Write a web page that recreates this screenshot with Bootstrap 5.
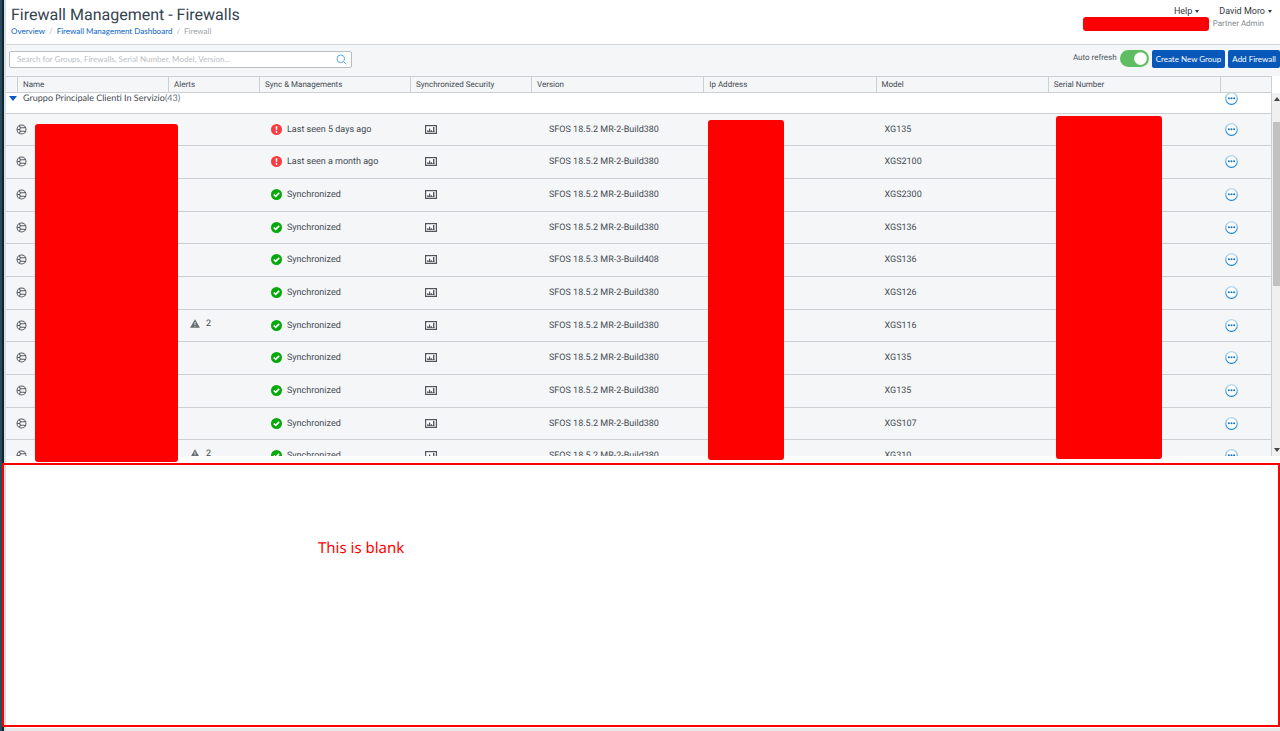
<!DOCTYPE html>
<html lang="en">
<head>
<meta charset="utf-8">
<meta name="viewport" content="width=device-width, initial-scale=1">
<title>Firewall Management - Firewalls</title>
<link href="https://cdn.jsdelivr.net/npm/bootstrap@5.3.0/dist/css/bootstrap.min.css" rel="stylesheet">
<style>
body{font-family:Roboto,"Liberation Sans",sans-serif;font-size:9px;line-height:12px;color:#444b52;background:#fff;text-rendering:geometricPrecision}
a{text-decoration:none;color:#0b63c5}
svg{display:block}
.rail{width:6px;background:linear-gradient(90deg,#2c4a5c 0 2px,#0c2634 2px 4px,#d9dee1 4px)}
.page-head{height:45px;padding:5px 8px 0 5px;border-bottom:1px solid #d3d5d8}
h1{font-size:16px;line-height:20px;color:#33434f}
.breadcrumb,.btn-main,.search-wrap .form-control,.group-name{font-family:Lato,Roboto,sans-serif}
.breadcrumb{font-size:8px;--bs-breadcrumb-item-padding-x:4px;--bs-breadcrumb-divider-color:#a5abb0}
.breadcrumb .active{color:#a0a6ab}
.menu-btn{border:0;background:none;padding:0;color:#33393f;font-size:9px;line-height:12px}
.menu-btn::after{border-width:3px 2px 0;margin-left:3px;vertical-align:1px}
.role-text{font-size:8px;color:#858b91}
.redact{background:#f00;border-radius:3px}
.redact-id{width:126px;height:14px}
.tools,.panel{background:#f4f6f8}
.tools{height:31px;padding:0 0 3px 3px}
.search-wrap{width:343px}
.search-wrap .form-control{height:17px;min-height:0;padding:0 24px 0 7px;font-size:8px;line-height:12px;border:1px solid #b9bec3;border-radius:2px;color:#444}
.search-wrap .form-control::placeholder{color:#b9bec3}
.search-wrap svg{right:5px;top:3px}
.form-switch.refresh{min-height:0;padding:0;gap:3px;color:#4b555e;font-size:8px}
.form-switch.refresh .form-check-input{width:29px;height:17px;margin:0;float:none;border:0;background-color:#5fbe61;background-size:17px}
.actions{gap:3px}
.btn-main{height:18px;padding:0 4px;border:0;border-radius:2px;background:#0758b8;color:#fff;font-size:8px;line-height:18px}
.btn-main:hover{background:#064a9c;color:#fff}
.grid-clip{height:380px;overflow:hidden}
.fw-table{table-layout:fixed;margin:0;color:inherit;border-collapse:separate;border-spacing:0;--bs-table-bg:transparent}
.fw-table>:not(caption)>*>*{padding:0;border:0;color:#444b52;background:none}
.fw-table th{height:17px;font-weight:400;font-size:8px;line-height:15px;vertical-align:top}
.fw-table>thead>tr>th{border:solid #cdd0d3;border-width:1px 1px 1px 0;padding-left:5px}
.fw-table td{white-space:nowrap;vertical-align:top}
.fw-table>tbody>tr>td{border-bottom:1px solid #cdd0d3}
.fw-table>tbody>tr>td:last-child{border-right:1px solid #cdd0d3}
.group-row{background:#fff}
.clip20{height:20px;overflow:hidden;line-height:10px}
.device td{height:33px}
.device:nth-child(3n+2) td{height:32px}
.cell{height:31px}
.in-sync{padding-left:11px;gap:5px}
.in-sec{padding-left:14px}
.in-ver{padding-left:17px}
.in-mod{padding-left:8px}
.in-act{padding-left:4px}
.in-alert{padding-left:21px;gap:6px;height:27px}
.in-name{padding-left:10px}
.act{border:0;padding:0;background:none;color:#1681cc}
.overlay-cols{inset:0;display:grid;grid-template-columns:12px 151px 91px 151px 121px 1fr 1fr 1fr 1fr 51px;padding-right:8px;pointer-events:none}
.cover-name{grid-column:2/4;width:143px;height:338px;margin:48px 0 0 17px}
.cover-ip{grid-column:7;width:76px;height:340px;margin:44px 0 0 4px}
.cover-sn{grid-column:9;width:106px;height:343px;margin:40px 0 0 7px}
.scroller{width:8px;background:#fff;padding-top:17px}
.track{background:#f0f0f0;height:363px;padding:4px 0 4px 1px}
.thumb{background:#c1c1c1;height:164px;margin-top:21px}
.note-box{border:2px solid #f00;margin:7px 0 4px -4px;padding:73px 0 0 314px;font-family:"Noto Sans","Open Sans",sans-serif;font-size:15px;line-height:20px;color:#f00}
.foot-strip{height:3px;margin-top:-3px;background:#e8e8e8}
</style>
</head>
<body>
<svg class="d-none" aria-hidden="true">
<symbol id="i-node" viewBox="0 0 12 12"><g fill="none" stroke="#555c62" stroke-width="1.1"><circle cx="6" cy="6" r="4.9"/><path d="M1.2 6h2.8M8.6 4.2H4.8L4 6l.8 2h3.8M8.6 4.2l2-.4M8.6 8l2 .4M4.8 4.2 3.6 2M4.8 8 3.6 10"/></g></symbol>
<symbol id="i-bad" viewBox="0 0 11 11"><circle cx="5.5" cy="5.5" r="5.5" fill="#fb3a3f"/><path d="M4.6 2.2h1.8l-.3 4h-1.2z" fill="#fff"/><circle cx="5.5" cy="8" r=".9" fill="#fff"/></symbol>
<symbol id="i-ok" viewBox="0 0 11 11"><circle cx="5.5" cy="5.5" r="5.5" fill="#06a80a"/><path d="m2.8 5.5 1.9 1.9 3.5-3.6" fill="none" stroke="#fff" stroke-width="1.7"/></symbol>
<symbol id="i-sec" viewBox="0 0 12 9"><path d="M.6.6h10.8v7.8H.6z" fill="#fff" stroke="#50565c" stroke-width="1.2"/><path d="M2.4 7V5h1v2zM4 7V3.6h1.2V7zM5.8 7V5h1v2zM8 7V2h1.4v5z" fill="#50565c"/><path d="M2 6.6h7.6" stroke="#50565c" stroke-width=".8"/></symbol>
<symbol id="i-warn" viewBox="0 0 10 9"><path d="M5 .2 9.9 8.8H.1z" fill="#666c72"/><path d="M5 3v3M5 6.8v1" stroke="#fff" stroke-width=".8"/></symbol>
<symbol id="i-more" viewBox="0 0 13 13"><circle cx="6.5" cy="6.5" r="5.8" fill="#fff" stroke="url(#ring)" stroke-width="1.2"/><g fill="#1476ba"><circle cx="3.9" cy="6.2" r="1"/><circle cx="6.5" cy="6.2" r="1"/><circle cx="9.1" cy="6.2" r="1"/></g></symbol>
</svg>
<svg class="position-absolute" width="0" height="0" aria-hidden="true"><linearGradient id="ring" x1="0" y1="0" x2="0" y2="1"><stop offset="0" stop-color="#b5d9ef"/><stop offset="1" stop-color="#1681cc"/></linearGradient></svg>

<div class="d-flex min-vh-100 overflow-hidden">
  <nav class="rail flex-shrink-0" aria-label="Main"></nav>
  <main class="flex-fill d-flex flex-column">
    <header class="page-head d-flex justify-content-between">
      <div>
        <h1 class="m-0 fw-normal">Firewall Management - Firewalls</h1>
        <nav aria-label="breadcrumb"><ol class="breadcrumb m-0">
          <li class="breadcrumb-item"><a href="#">Overview</a></li>
          <li class="breadcrumb-item"><a href="#">Firewall Management Dashboard</a></li>
          <li class="breadcrumb-item active" aria-current="page">Firewall</li>
        </ol></nav>
      </div>
      <div>
        <div class="d-flex justify-content-end">
          <button class="menu-btn dropdown-toggle me-3" type="button">Help</button>
          <button class="menu-btn dropdown-toggle ms-1" type="button">David Moro</button>
        </div>
        <div class="d-flex align-items-center gap-1 role-text pe-2"><span class="redact redact-id"></span>Partner Admin</div>
      </div>
    </header>
    <div class="tools d-flex align-items-center justify-content-between">
      <div class="search-wrap position-relative">
        <input class="form-control" type="search" aria-label="Search" placeholder="Search for Groups, Firewalls, Serial Number, Model, Version...">
        <svg class="position-absolute" width="11" height="11" viewBox="0 0 11 11" fill="none" stroke="#5aaee4"><circle cx="4.8" cy="4.8" r="3.8"/><path d="m7.6 7.6 2.6 2.6"/></svg>
      </div>
      <div class="d-flex align-items-center actions">
        <div class="form-check form-switch refresh d-flex align-items-center">
          <label for="auto">Auto refresh</label>
          <input class="form-check-input" type="checkbox" role="switch" id="auto" checked>
        </div>
        <button class="btn btn-main" type="button">Create New Group</button>
        <button class="btn btn-main" type="button">Add Firewall</button>
      </div>
    </div>
    <section class="panel d-flex position-relative">
      <div class="grid-clip flex-fill">
        <table class="table fw-table">
          <colgroup><col style="width:12px"><col style="width:151px"><col style="width:91px"><col style="width:151px"><col style="width:121px"><col><col><col><col><col style="width:51px"></colgroup>
          <thead><tr><th></th><th>Name</th><th>Alerts</th><th>Sync &amp; Managements</th><th>Synchronized Security</th><th>Version</th><th>Ip Address</th><th>Model</th><th>Serial Number</th><th></th></tr></thead>
          <tbody id="rows">
            <tr class="group-row">
              <td colspan="9"><div class="clip20 d-flex"><svg width="17" height="8" viewBox="0 0 17 8"><path d="M3 3h8L7 8z" fill="#0b5cc0"/></svg><span class="group-name">Gruppo Principale Clienti In Servizio<span class="text-secondary">(43)</span></span></div></td>
              <td><div class="clip20 d-flex align-items-start in-act"><button class="act" type="button" aria-label="Group actions"><svg width="13" height="12" viewBox="0 1 13 12"><use href="#i-more" width="13" height="13"/></svg></button></div></td>
            </tr>
          </tbody>
        </table>
      </div>
      <div class="scroller flex-shrink-0"><div class="track d-flex flex-column">
        <svg width="7" height="4" viewBox="0 0 7 4"><path d="M1 4h6L4 0z" fill="#444"/></svg>
        <div class="thumb"></div>
        <svg class="mt-auto" width="7" height="4" viewBox="0 0 7 4"><path d="M1 0h6L4 4z" fill="#444"/></svg>
      </div></div>
      <div class="overlay-cols position-absolute">
        <div class="redact cover-name"></div><div class="redact cover-ip"></div><div class="redact cover-sn"></div>
      </div>
    </section>
    <section class="note-box flex-fill position-relative">This is blank</section>
    <div class="foot-strip"></div>
  </main>
</div>
<script>
const devices = [
  ['bad','Last seen 5 days ago','','XG135'],
  ['bad','Last seen a month ago','','XGS2100'],
  ['ok','Synchronized','','XGS2300'],
  ['ok','Synchronized','','XGS136'],
  ['ok','Synchronized','','XGS136','SFOS 18.5.3 MR-3-Build408'],
  ['ok','Synchronized','','XGS126'],
  ['ok','Synchronized','2','XGS116'],
  ['ok','Synchronized','','XG135'],
  ['ok','Synchronized','','XG135'],
  ['ok','Synchronized','','XGS107'],
  ['ok','Synchronized','2','XG310']
];
const icon = (id, w, h) => `<svg width="${w}" height="${h}"><use href="#i-${id}"/></svg>`;
const cell = (cls, html) => `<td><div class="cell d-flex align-items-center ${cls}">${html}</div></td>`;
document.getElementById('rows').insertAdjacentHTML('beforeend', devices.map(([state, text, alerts, model, version = 'SFOS 18.5.2 MR-2-Build380']) =>
  `<tr class="device"><td colspan="2"><div class="cell d-flex align-items-center in-name">${icon('node', 11, 11)}</div></td>` +
  `<td><div class="d-flex align-items-center in-alert">${alerts ? icon('warn', 10, 9) + alerts : ''}</div></td>` +
  cell('in-sync', icon(state, 11, 11) + text) + cell('in-sec', icon('sec', 12, 9)) +
  cell('in-ver', version) + cell('', '') + cell('in-mod', model) + cell('', '') +
  cell('in-act', `<button class="act" type="button" aria-label="Actions">${icon('more', 13, 13)}</button>`) + '</tr>').join(''));
</script>
<script src="https://cdn.jsdelivr.net/npm/bootstrap@5.3.0/dist/js/bootstrap.bundle.min.js"></script>
</body>
</html>
